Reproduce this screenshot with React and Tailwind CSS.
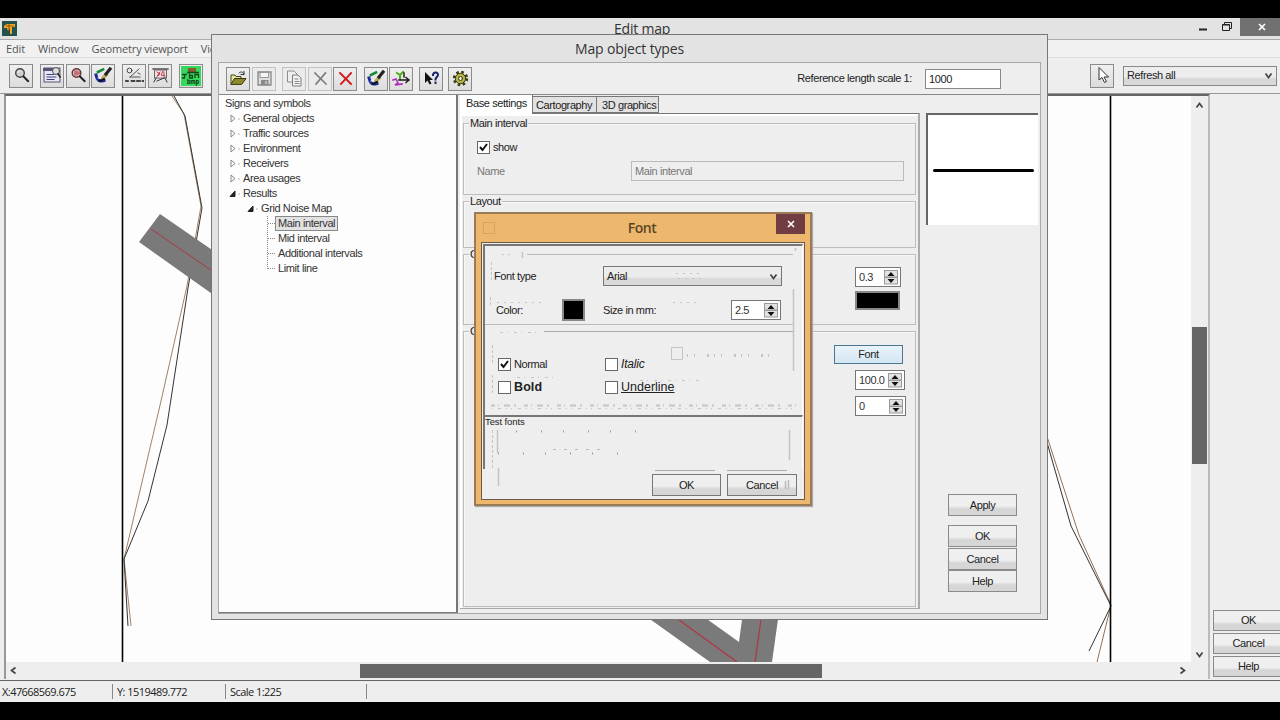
import clsx from 'clsx'

function Svg({ children, size = 19 }) {
  return (
    <svg width={size} height={size} viewBox="0 0 19 19" fill="none" strokeLinecap="square">
      {children}
    </svg>
  )
}

const BrushIcon = () => (
  <Svg>
    <path d="M4 6l5-2.5" stroke="#168a35" strokeWidth="2.6" />
    <path d="M2 9c1 5 3 7 8 5.500" stroke="#1a2a9a" strokeWidth="3" />
    <path d="M4 12l5-1" stroke="#fff" strokeWidth="1" />
    <path d="M9 12l3-3" stroke="#b9a45a" strokeWidth="3.4" />
    <path d="M12 8l4-5" stroke="#222" strokeWidth="3.2" />
    <path d="M6 15l4-2" stroke="#111" strokeWidth="2" />
  </Svg>
)

const ICONS = {
  zoom: (
    <Svg>
      <circle cx="8" cy="7" r="4.300" fill="#cfcfcf" stroke="#444" strokeWidth="1.400" />
      <path d="M6 6.500l2-2" stroke="#fff" />
      <path d="M11.500 10.500l4.500 4.500" stroke="#222" strokeWidth="2" />
    </Svg>
  ),
  windowZoom: (
    <Svg>
      <rect x="1" y="2" width="16" height="14" fill="#e8e8f4" stroke="#55556e" />
      <path d="M1 3.500h12" stroke="#55557a" strokeWidth="3" />
      <path d="M4 8.500h7M4 11h9M4 13.500h7" stroke="#3c3c85" />
      <circle cx="13" cy="5" r="3.500" fill="#ddd" stroke="#555" />
      <path d="M15 8l2 3" stroke="#222" strokeWidth="1.600" />
    </Svg>
  ),
  zoomObject: (
    <Svg>
      <circle cx="7.500" cy="7" r="4.300" fill="#e6bfc2" stroke="#5d3b3b" strokeWidth="1.400" />
      <path d="M6 5v4M8 5v4M10 6v2" stroke="#a3232f" />
      <path d="M11 10.500l4.500 4.500" stroke="#222" strokeWidth="2" />
    </Svg>
  ),
  brush: <BrushIcon />,
  slope: (
    <Svg>
      <circle cx="4.500" cy="4.500" r="2.400" stroke="#444" />
      <path d="M5 11L14 3M5 11h10M13 7l2 1" stroke="#555" />
      <path d="M1 15h2M6.500 15h3M12 15h3M17.500 15h1" stroke="#111" strokeWidth="1.600" />
    </Svg>
  ),
  board: (
    <Svg>
      <path d="M2 3h15" stroke="#444" strokeWidth="1.400" />
      <rect x="3.500" y="4" width="12" height="8" fill="#f6e3e6" stroke="#666" />
      <path d="M6 6l3 2-2 2M12 5l-2 4 4 1M6 10l3-4M13 6v4" stroke="#b4384b" />
      <path d="M5 12l-2 4M14 12l2 4M6 15l7-3" stroke="#333" />
    </Svg>
  ),
  bmp: (
    <svg width="20" height="20" viewBox="0 0 20 20" fill="none">
      <rect width="20" height="20" fill="#35d85c" />
      <path d="M7 2h8v4H7z" fill="#8a5a2a" />
      <path d="M1 8.500h5M3.500 8.500V12H1M8.500 7.500v5M8 9.500h3.500V12H8.500M14 12V8.500h3.500V12M6 6.500h12" stroke="#134a1c" strokeWidth="1.300" />
      <text x="6" y="17.500" fill="#0b2410" fontSize="7" fontWeight="bold" fontFamily="Liberation Sans, sans-serif" letterSpacing="0" textLength="12" lengthAdjust="spacingAndGlyphs">bmp</text>
    </svg>
  ),
  open: (
    <Svg>
      <path d="M2 14V6h4l1 1.500h5V9" fill="#e9e6a0" stroke="#44441c" />
      <path d="M2 15l3.500-5.500H17L13 15z" fill="#8c8a2c" stroke="#33330f" />
      <path d="M10 4c2-2 4-1 5 1M15 2.500V5.500h-3" stroke="#333" />
    </Svg>
  ),
  save: (
    <Svg>
      <path d="M3 3h13v13H3z" fill="#ddd" stroke="#888" strokeWidth="1.300" />
      <path d="M5.500 3.500h8v5h-8z" fill="#f4f4f4" stroke="#999" />
      <path d="M6 11h7.500v5H6z" fill="#888" />
      <path d="M11 12.500v2" stroke="#eee" />
    </Svg>
  ),
  copy: (
    <Svg>
      <path d="M3 2h6l3 3v8H3z" fill="#eee" stroke="#8c8c8c" />
      <path d="M8 6h5l3 3v8H8z" fill="#f2f2f2" stroke="#7c7c7c" />
      <path d="M10 10h3M10 12.500h4M10 14.500h4" stroke="#888" />
    </Svg>
  ),
  cross: (
    <Svg>
      <path d="M4 4l11 11M14.500 4L5 15" stroke="#7a7a7a" strokeWidth="1.600" />
    </Svg>
  ),
  crossRed: (
    <Svg>
      <path d="M4 4l11 11M15 4L5 15" stroke="#d01c1c" strokeWidth="1.900" />
    </Svg>
  ),
  route: (
    <Svg>
      <path d="M5 4l3 2 3-3M8 6v4" stroke="#4fae1f" strokeWidth="2" />
      <path d="M1 11l3-1 2 4-3 2 7-1" stroke="#b22ac0" strokeWidth="1.600" />
      <path d="M7 11h10M14 8.500l3 2.500-3 2.500M12 4v4" stroke="#1a1a1a" strokeWidth="1.400" />
    </Svg>
  ),
  help: (
    <Svg>
      <path d="M3 3v11l2.500-2.500 2 4 2-1-2-3.500H11z" fill="#111" />
      <path d="M11 6c0-3.500 5.500-3 5 0 0 2-2.500 2-2.500 4.500M13.500 13.500v.5" stroke="#1d2470" strokeWidth="2" />
    </Svg>
  ),
  gear: (
    <Svg>
      <circle cx="9.500" cy="9.500" r="6.300" stroke="#3b3b12" strokeWidth="2.800" strokeDasharray="2.500 2.450" strokeLinecap="butt" />
      <circle cx="9.500" cy="9.500" r="5.200" fill="#b5b34a" stroke="#3b3b12" />
      <circle cx="9.500" cy="9.500" r="2" fill="#f3f3dd" stroke="#3b3b12" />
    </Svg>
  ),
  pointer: (
    <Svg>
      <path d="M6 2v12l3-2.500 2.500 5 2-1-2.500-4.500h4z" fill="#fff" stroke="#333" />
    </Svg>
  ),
}

function ToolButton({ icon, className, flat }) {
  return (
    <div
      className={clsx(
        'flex h-[24px] w-[24px] shrink-0 items-center justify-center border',
        flat ? 'border-[#c2c2c2] bg-[#ebebeb]' : 'border-[#8b8b8b] bg-linear-to-b from-[#efefef] to-[#dcdcdc]',
        className,
      )}
    >
      {ICONS[icon]}
    </div>
  )
}

function Button({ children, className }) {
  return (
    <div
      className={clsx(
        'flex shrink-0 items-center justify-center border border-[#8a8a8a] bg-linear-to-b from-[#efefef] from-55% to-[#d6d6d6] to-70% tracking-[-0.4px]',
        className,
      )}
    >
      {children}
    </div>
  )
}

function Spinner({ value, className }) {
  return (
    <div className={clsx('flex h-[20px] items-center border border-[#777] bg-white pl-[3px]', className)}>
      <span className="flex-1 text-[#333]">{value}</span>
      <svg width="14" height="15" viewBox="0 0 14 15" className="mr-[2px]">
        <rect x=".5" y=".5" width="13" height="6.500" fill="#e2e2e2" stroke="#999" />
        <rect x=".5" y="7.500" width="13" height="6.500" fill="#e2e2e2" stroke="#999" />
        <path d="M7 2l3.500 4h-7zM7 13l3.500-4h-7z" fill="#111" />
      </svg>
    </div>
  )
}

function CheckBox({ checked, label, className, labelClass }) {
  return (
    <div className={clsx('flex h-[14px] items-center', className)}>
      <div className="flex h-[13px] w-[13px] shrink-0 items-center justify-center border border-[#666] bg-white">
        {checked && (
          <svg width="9" height="9" viewBox="0 0 9 9">
            <path d="M1 4l2.500 3L8 1" fill="none" stroke="#111" strokeWidth="2" />
          </svg>
        )}
      </div>
      <span className={clsx('ml-[3px] whitespace-nowrap', labelClass)}>{label}</span>
    </div>
  )
}

function GroupBox({ title, className, children }) {
  return (
    <div className={clsx('relative ml-[3px] mr-[2px] border border-[#bdbdbd] shadow-[inset_1px_1px_0_#f8f8f8]', className)}>
      {title && <span className="absolute -top-[6px] left-[5px] bg-[#eee] px-px leading-[11px]">{title}</span>}
      {children}
    </div>
  )
}

function Chevron({ dir }) {
  const paths = {
    up: 'M1.500 6.500l3-4 3 4',
    down: 'M1.500 2.500l3 4 3-4',
    left: 'M6.500 1.500l-4 3 4 3',
    right: 'M2.500 1.500l4 3-4 3',
  }
  return (
    <svg width="9" height="9" viewBox="0 0 9 9" fill="none" stroke="#444" strokeWidth="1.700">
      <path d={paths[dir]} />
    </svg>
  )
}

function MapDrawing() {
  return (
    <svg width="1185" height="566" viewBox="6 96 1185 566" className="block bg-[#fefdfe]">
      <g fill="none" strokeWidth="1">
        <path d="M172 96l12 18 17 92-14 80-26 115-37 158 7 67" stroke="#a08366" />
        <path d="M174 96l11 20 17 92-14 80-21 137-19 76-24 58 4 67" stroke="#333" />
        <path d="M1040 415l39 120 32 70-14 57" stroke="#96704e" />
        <path d="M1040 418l31 108 40 80-22 45" stroke="#333" />
      </g>
      <path d="M122.500 96v566M1110.500 96v566" stroke="#000" strokeWidth="1.600" />
      <path d="M160 214L260 283 239 313 139 242z" fill="#7a7a7a" />
      <path d="M151 229L240 290" stroke="#b03540" />
      <path d="M640 612L710 662h62L779 612h-36l-4 30-42-30z" fill="#7a7a7a" />
      <path d="M668 612L737 662M762 612L755 662" stroke="#b03540" strokeWidth="1.200" />
    </svg>
  )
}

const MAIN_TOOLS = [
  ['zoom', 'ml-[9px]'],
  ['windowZoom', 'ml-[7px]'],
  ['zoomObject', 'ml-[2px]'],
  ['brush', 'ml-[1px]'],
  ['slope', 'ml-[7px]'],
  ['board', 'ml-[2px]'],
  ['bmp', 'ml-[7px]'],
]

function MainWindow() {
  return (
    <div className="flex h-[684px] flex-col bg-[#eee]">
      <div className="flex h-[22px] items-start border-b border-[#aaa] bg-[#e3e3e3]">
        <div className="ml-[2px] mt-[3px] flex h-[15px] w-[15px] items-center justify-center bg-[#24524f]">
          <svg width="13" height="13" viewBox="0 0 13 13">
            <path d="M1 4l3-2h8v3H9v7H7V6L5 9 4 6H1z" fill="#f2a81d" />
            <path d="M6 2v8M3 4h8" stroke="#8a3b10" strokeWidth=".8" />
          </svg>
        </div>
        <span className="ml-[597px] mt-[3px] whitespace-nowrap font-['Open_Sans',sans-serif] text-[14px] leading-[16px] tracking-[-0.2px] text-[#333]">Edit map</span>
        <svg width="42" height="16" viewBox="0 0 42 16" fill="none" stroke="#222" className="ml-auto mr-[5px]">
          <path d="M6 11.500h8" strokeWidth="2" />
          <path d="M29.500 6.500h7v6h-7zM31.500 6V4.500h7v6H37M29 7h8" />
        </svg>
        <div className="flex h-[18px] w-[40px] items-center justify-center bg-[#717171]">
          <svg width="8" height="8" viewBox="0 0 8 8" stroke="#fff" strokeWidth="1.700" className="ml-[3px]"><path d="M1 1l6 6M7 1L1 7" /></svg>
        </div>
      </div>
      <div className="flex h-[18px] items-center gap-[13px] whitespace-nowrap border-b border-[#ddd] bg-[#f1f1f1] pl-[6px] font-['Open_Sans',sans-serif] text-[11px] tracking-[-0.15px] text-[#555]">
        <span>Edit</span>
        <span>Window</span>
        <span>Geometry viewport</span>
        <span>View</span>
      </div>
      <div className="flex h-[36px] items-center border-b border-[#999]">
        {MAIN_TOOLS.map(([icon, margin]) => (
          <ToolButton key={icon} icon={icon} className={margin} />
        ))}
        <ToolButton icon="pointer" className="ml-auto mr-[9px]" />
        <div className="mr-[3px] flex h-[20px] w-[154px] items-center justify-between border border-[#888] bg-linear-to-b from-[#ededed] from-55% to-[#d8d8d8] to-65% pl-[3px] pr-[3px]">
          <span>Refresh all</span>
          <Chevron dir="down" />
        </div>
      </div>
      <div className="flex h-[587px] border-b border-[#666]">
        <div className="ml-[4px] flex h-[585px] w-[1206px] shrink-0 flex-col border-r-2 border-t-2 border-l-2 border-r-[#bbb] border-l-[#999] border-t-[#666]">
          <div className="flex h-[566px]">
            <MapDrawing />
            <div className="flex w-[16px] flex-col items-center bg-[#eee] pt-[5px]">
              <Chevron dir="up" />
              <div className="mt-[217px] h-[137px] w-[15px] bg-[#666]" />
              <div className="mt-auto mb-[3px]"><Chevron dir="down" /></div>
            </div>
          </div>
          <div className="flex h-[17px] items-center bg-[#eee] pl-[3px]">
            <Chevron dir="left" />
            <div className="ml-[342px] h-[14px] w-[462px] bg-[#666]" />
            <div className="ml-[356px]"><Chevron dir="right" /></div>
          </div>
        </div>
        <div className="flex flex-1 flex-col gap-[2px] overflow-hidden pt-[516px] pl-[3px]">
          <Button className="h-[21px] w-[71px]">OK</Button>
          <Button className="h-[21px] w-[71px]">Cancel</Button>
          <Button className="h-[21px] w-[71px]">Help</Button>
        </div>
      </div>
      <div className="flex h-[20px] items-center whitespace-nowrap font-['Open_Sans',sans-serif] text-[11px] tracking-[-0.55px] text-[#222]">
        <span className="w-[112px] pl-[2px]">X:47668569.675</span>
        <span className="w-[113px] border-l border-[#888] pl-[4px]">Y: 1519489.772</span>
        <span className="w-[142px] border-x border-[#888] pl-[4px]">Scale 1:225</span>
      </div>
    </div>
  )
}

const DIALOG_TOOLS = [
  ['open', 'ml-[7px]'],
  ['save', 'ml-[2px]', true],
  ['copy', 'ml-[6px]', true],
  ['cross', 'ml-[2px]', true],
  ['crossRed', 'ml-[1px]'],
  ['brush', 'ml-[7px]'],
  ['route', 'ml-[1px]'],
  ['help', 'ml-[6px]'],
  ['gear', 'ml-[5px]'],
]

const TREE = [
  { label: 'General objects' },
  { label: 'Traffic sources' },
  { label: 'Environment' },
  { label: 'Receivers' },
  { label: 'Area usages' },
  { label: 'Results', open: true },
]

const LEAVES = ['Main interval', 'Mid interval', 'Additional intervals', 'Limit line']

function TreeArrow({ open }) {
  return (
    <svg width="14" height="9" viewBox="0 0 14 9" className="shrink-0">
      {open ? <path d="M1 7.500L6 2v5.500z" fill="#222" stroke="#222" /> : <path d="M2 1l4 3.500L2 8z" fill="#fff" stroke="#888" />}
      <path d="M9.500 5h1" stroke="#777" />
    </svg>
  )
}

function Tree() {
  return (
    <div className="h-[518px] w-[239px] shrink-0 border-r-2 border-b border-[#777] bg-[#fdfdfd] pt-px pl-[6px] text-[#333]">
      <div className="h-[15px] leading-[15px]">Signs and symbols</div>
      {TREE.map(({ label, open }) => (
        <div key={label} className="flex h-[15px] items-center pl-[4px]">
          <TreeArrow open={open} />
          <span>{label}</span>
        </div>
      ))}
      <div className="flex h-[15px] items-center pl-[22px]">
        <TreeArrow open />
        <span>Grid Noise Map</span>
      </div>
      <div className="ml-[42px] h-[53px] border-l border-dotted border-[#888]">
        {LEAVES.map((label, i) => (
          <div key={label} className="flex h-[15px] items-center">
            <span className="w-[7px] border-t border-dotted border-[#888]" />
            <span className={clsx('border px-[2px] leading-[13px]', i === 0 ? 'border-[#888] bg-[#e2e2e2]' : 'border-transparent')}>
              {label}
            </span>
          </div>
        ))}
      </div>
    </div>
  )
}

function Tabs() {
  return (
    <div className="flex h-[18px] items-end">
      <div className="-mb-px h-[19px] w-[73px] border-r border-[#777] bg-white pl-[6px] leading-[17px]">Base settings</div>
      <div className="h-[17px] w-[64px] border border-l-0 border-[#777] bg-[#e2e2e2] pl-[3px] leading-[17px]">Cartography</div>
      <div className="h-[17px] w-[62px] border border-l-0 border-[#777] bg-[#e2e2e2] pl-[5px] leading-[17px]">3D graphics</div>
    </div>
  )
}

function BaseSettings() {
  return (
    <div className="flex h-[496px] flex-col border-t border-r-2 border-b border-[#aaa] border-t-[#777] pt-[9px] shadow-[inset_2px_2px_0_#fff]">
      <GroupBox title="Main interval" className="h-[72px]">
        <CheckBox checked label="show" className="mt-[16px] ml-[13px]" />
        <div className="mt-[7px] ml-[13px] flex items-center text-[#777]">
          <span className="w-[154px]">Name</span>
          <div className="h-[20px] w-[273px] border border-[#bbb] pl-[3px] leading-[18px]">Main interval</div>
        </div>
      </GroupBox>
      <GroupBox title="Layout" className="mt-[6px] h-[47px]" />
      <GroupBox title="General" className="mt-[6px] h-[71px]">
        <div className="flex flex-col pt-[12px] pl-[391px]">
          <Spinner value="0.3" className="w-[46px]" />
          <div className="mt-[4px] h-[19px] w-[45px] border-2 border-[#888] bg-black" />
        </div>
      </GroupBox>
      <GroupBox title="Caption" className="mt-[6px] h-[276px]">
        <div className="flex flex-col pt-[13px] pl-[370px]">
          <div className="flex h-[19px] w-[69px] items-center justify-center border border-[#4a7795] bg-linear-to-b from-[#eaf3fa] to-[#d3e6f3]">Font</div>
          <Spinner value="100.0" className="mt-[6px] ml-[21px] w-[50px]" />
          <Spinner value="0" className="mt-[6px] ml-[21px] w-[51px]" />
        </div>
      </GroupBox>
    </div>
  )
}

function MapObjectTypes() {
  return (
    <div className="absolute top-[34px] left-[211px] flex h-[586px] w-[837px] flex-col border border-[#777] bg-[#e3e3e3]">
      <div className="h-[27px] pt-[5px] text-center font-['Open_Sans',sans-serif] text-[14px] leading-[17px] tracking-[-0.15px] text-[#333]">Map object types</div>
      <div className="mx-[6px] h-[552px] border border-[#a8a8a8] bg-[#eee]">
        <div className="flex h-[32px] items-center border-b border-[#888]">
          {DIALOG_TOOLS.map(([icon, margin, flat]) => (
            <ToolButton key={icon} icon={icon} className={margin} flat={flat} />
          ))}
          <span className="ml-auto">Reference length scale 1:</span>
          <div className="ml-[13px] mr-[39px] h-[20px] w-[76px] border border-[#888] bg-white pl-[3px] leading-[18px]">1000</div>
        </div>
        <div className="flex">
          <Tree />
          <div className="ml-[2px] w-[460px] shrink-0">
            <Tabs />
            <BaseSettings />
          </div>
          <div className="flex flex-col pl-[6px]">
            <div className="mt-[18px] flex h-[112px] w-[112px] items-center border-t-2 border-l-2 border-[#666] bg-white">
              <div className="ml-[5px] h-[3px] w-[101px] rounded bg-black" />
            </div>
            <div className="mt-[269px] ml-[22px] flex flex-col">
              <Button className="h-[22px] w-[69px]">Apply</Button>
              <Button className="mt-[9px] h-[22px] w-[69px]">OK</Button>
              <Button className="mt-[1px] h-[22px] w-[69px]">Cancel</Button>
              <Button className="h-[22px] w-[69px]">Help</Button>
            </div>
          </div>
        </div>
      </div>
    </div>
  )
}

// faint leftovers of the previous repaint, drawn over the font dialog
function RepaintTraces() {
  return (
    <svg width="322" height="256" viewBox="482 243 322 256" fill="none" className="pointer-events-none absolute top-0 left-0">
      <g stroke="#c4c4c4">
        <path d="M502 254.500h11" strokeDasharray="2 4" />
        <path d="M522.500 252v6M497.500 430v23M498.500 468v18M793.500 289v82M789.500 430v30M795.500 248v3" strokeWidth="1.500" />
        <path d="M491.500 262v18M490.500 297v10M492.500 345v20M492.500 375v20M492.500 430v40" strokeDasharray="3 2" />
        <path d="M497 302.500h45M676 273.500h26M673 302.500h26M678 278.500h22" strokeDasharray="2 5" />
        <path d="M500 332.500h42M517 377.500h38M640 380.500h60" strokeDasharray="3 4 1 6" />
        <path d="M687 355.500h86" strokeDasharray="1 6 1 12 2 5" strokeWidth="3" />
        <path d="M491 405.500h306" strokeDasharray="4 3 1 5 6 4 2 8" strokeWidth="2" />
        <path d="M491 408.500h306" strokeDasharray="1 6 3 5 1 4" />
        <path d="M671.500 347.500h11v12h-11z" />
      </g>
      <g stroke="#999">
        <path d="M516 431.500h130M498 453.500h126" strokeDasharray="1 24 1 21" strokeWidth="2" />
        <path d="M553 449.500h50" strokeDasharray="3 8" stroke="#bbb" />
        <path d="M655 470.500h60M727 470.500h60" stroke="#aaa" />
        <path d="M495 279.500h22" strokeDasharray="1 5" />
        <path d="M785.500 481v8M788.500 480v9" stroke="#bbb" strokeWidth="1.500" />
      </g>
    </svg>
  )
}

function FontDialog() {
  return (
    <div className="absolute top-[212px] left-[474px] flex h-[294px] w-[338px] flex-col border-2 border-[#9a7b56] bg-[#edb86d] shadow-[1px_1px_1px_#aaa]">
      <div className="flex h-[28px] items-start">
        <div className="mt-[8px] ml-[7px] h-[12px] w-[12px] border border-[#d7a35d]" />
        <span className="flex-1 pt-[5px] pl-[13px] text-center font-['Open_Sans',sans-serif] text-[14px] leading-[18px] font-semibold tracking-[-0.5px] text-[#5b4424]">Font</span>
        <div className="mr-[5px] flex h-[20px] w-[29px] items-center justify-center bg-[#713d42]">
          <svg width="8" height="8" viewBox="0 0 8 8" stroke="#fff" strokeWidth="1.600"><path d="M1 1l6 6M7 1L1 7" /></svg>
        </div>
      </div>
      <div className="relative ml-[5px] flex h-[258px] w-[324px] flex-col border border-[#6b5a44] bg-[#eee] pt-px pr-px pl-px">
        <div className="h-[171px] border-t-2 border-l-2 border-r border-t-[#777] border-l-[#777] border-r-white">
          <div className="mt-[8px] mr-[9px] ml-[42px] border-t border-[#bbb]" />
          <div className="mt-[11px] flex h-[20px] items-center pl-[9px]">
            <span className="w-[109px]">Font type</span>
            <div className="flex h-[20px] w-[179px] items-center justify-between border border-[#777] bg-linear-to-b from-[#ececec] from-55% to-[#d9d9d9] to-65% pr-[3px] pl-[3px]">
              <span>Arial</span>
              <Chevron dir="down" />
            </div>
          </div>
          <div className="mt-[13px] flex h-[22px] items-center pl-[11px]">
            <span className="w-[66px]">Color:</span>
            <div className="h-[22px] w-[23px] border-2 border-[#888] bg-black" />
            <span className="ml-[18px] w-[128px]">Size in mm:</span>
            <Spinner value="2.5" className="w-[50px]" />
          </div>
          <div className="mt-[3px] mr-[9px] border-t border-[#bbb]" />
          <div className="mt-[6px] mr-[9px] ml-[59px] border-t border-[#aaa]" />
          <div className="mt-[25px] flex pl-[13px]">
            <CheckBox checked label="Normal" className="w-[107px]" />
            <CheckBox label="Italic" labelClass="italic tracking-[-0.2px] text-[12px]" />
          </div>
          <div className="mt-[9px] flex pl-[13px]">
            <CheckBox label="Bold" className="w-[107px]" labelClass="font-bold text-[12.500px] tracking-[0.1px]" />
            <CheckBox label="Underline" labelClass="underline text-[12.500px] tracking-[0px]" />
          </div>
        </div>
        <div className="h-[54px] border-t-2 border-l-2 border-r border-t-[#777] border-l-[#777] border-r-white">
          <div className="text-[9.500px] leading-[10px] tracking-[-0.1px]">Test fonts</div>
        </div>
        <div className="flex gap-[6px] pt-[5px] pl-[169px]">
          <Button className="h-[22px] w-[69px] border-[#777]">OK</Button>
          <Button className="h-[22px] w-[70px] border-[#777]">Cancel</Button>
        </div>
        <RepaintTraces />
      </div>
    </div>
  )
}

export default function App() {
  return (
    <div className="relative h-[720px] w-[1280px] overflow-hidden bg-black pt-[18px] font-['Liberation_Sans',Arial,sans-serif] text-[11px] leading-[15px] tracking-[-0.4px] text-[#222]">
      <MainWindow />
      <MapObjectTypes />
      <FontDialog />
    </div>
  )
}
